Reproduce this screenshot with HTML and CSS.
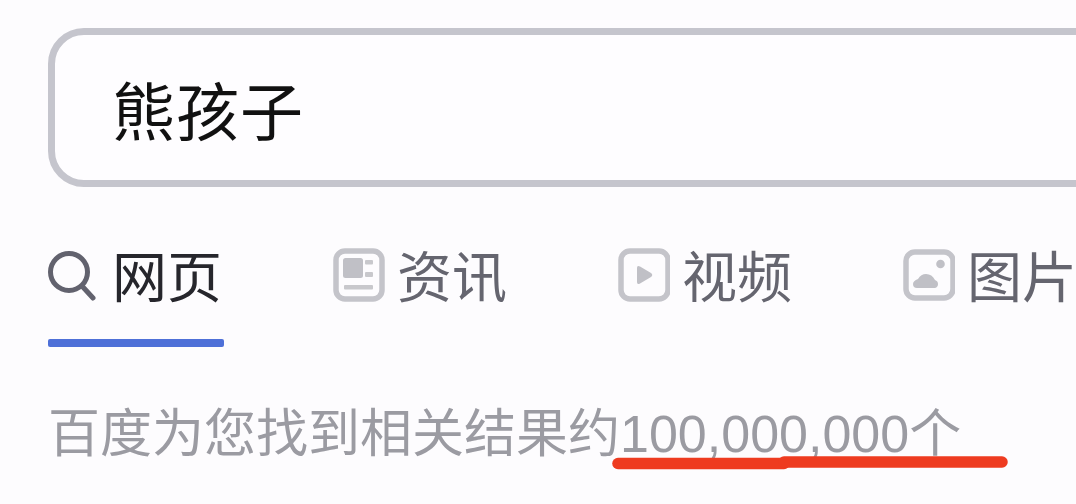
FILE: index.html
```html
<!DOCTYPE html>
<html lang="zh">
<head>
<meta charset="utf-8">
<title>熊孩子</title>
<link rel="stylesheet" href="styles.css">
</head>
<body>
<main class="page">
  <div class="search-box"><span class="query">熊孩子</span></div>
  <nav class="tabs">
    <div class="tab tab-active">
      <svg class="icon icon-search" viewBox="0 0 48 50"><circle cx="21" cy="21" r="18.5" fill="none" stroke="#62626e" stroke-width="5"/><path d="M34 35l11 12" fill="none" stroke="#62626e" stroke-width="5" stroke-linecap="round"/></svg>
      <span class="label">网页</span>
      <i class="tab-bar"></i>
    </div>
    <div class="tab">
      <svg class="icon" viewBox="0 0 52 54"><rect x="3" y="3" width="46" height="48" rx="9" fill="none" stroke="#c4c4ca" stroke-width="5.5"/><rect x="10" y="10" width="20" height="20" rx="2.5" fill="#c0c0c6"/><rect x="32" y="12" width="8" height="4.500" rx="1" fill="#c8c8cc"/><rect x="32" y="24" width="8" height="5" rx="1" fill="#c8c8cc"/><rect x="11" y="37" width="29" height="4.500" rx="1" fill="#c8c8cc"/></svg>
      <span class="label">资讯</span>
    </div>
    <div class="tab">
      <svg class="icon" viewBox="0 0 52 54"><rect x="3" y="3" width="47" height="48" rx="9" fill="none" stroke="#c4c4ca" stroke-width="5.5"/><path d="M19 20q0-3 3-1.500l11 6.500q2.500 2 0 4l-11 6.500q-3 1.500-3-1.500z" fill="#c0c0c6"/></svg>
      <span class="label">视频</span>
    </div>
    <div class="tab">
      <svg class="icon" viewBox="0 0 52 54"><rect x="3" y="4" width="47" height="46" rx="9" fill="none" stroke="#c4c4ca" stroke-width="5.5"/><circle cx="37.500" cy="16" r="4.300" fill="#c0c0c6"/><path d="M14 40q-4 0-4-4 0-3 5-5 3-5 8-5 6 0 9 6 3 1 3 4t-3 4z" fill="#c0c0c6"/></svg>
      <span class="label">图片</span>
    </div>
  </nav>
  <p class="result">百度为您找到相关结果约<span class="num">100,000,000</span>个</p>
  <svg class="scribble" viewBox="0 0 400 16"><path d="M6 8.500H172" stroke="#ee3b20" stroke-width="11.500" stroke-linecap="round" fill="none"/><path d="M172 7H390" stroke="#ee3b20" stroke-width="11.500" stroke-linecap="round" fill="none"/></svg>
</main>
</body>
</html>
```
FILE: styles.css
```css
html, body {
  margin: 0;
  padding: 0;
  background: #fdfcfe;
}
.page {
  position: relative;
  width: 1076px;
  height: 504px;
  overflow: hidden;
  padding: 28px 0 0 48px;
  box-sizing: border-box;
  font-family: "Noto Sans CJK SC", "Liberation Sans", sans-serif;
}
.search-box {
  width: 1100px;
  height: 159px;
  box-sizing: border-box;
  border: 7px solid #c5c5cd;
  border-radius: 36px;
  background: #fefdff;
  display: flex;
  align-items: center;
  padding-left: 57px;
}
.query {
  font-size: 63px;
  line-height: 1;
  color: #111;
  letter-spacing: 1px;
}
.tabs {
  display: flex;
  margin-top: 58px;
  height: 102px;
}
.tab {
  position: relative;
  display: flex;
  flex: none;
  align-items: flex-start;
  gap: 12px;
  margin-right: 111px;
  font-size: 55px;
  line-height: 56px;
  color: #65656f;
}
.label {
  white-space: nowrap;
}
.tab-active {
  color: #26262c;
  gap: 16px;
}
.icon {
  width: 52px;
  height: 54px;
  margin-top: 3px;
  flex: none;
}
.icon-search {
  width: 48px;
  height: 50px;
  margin-top: 6px;
}
.tab-bar {
  position: absolute;
  left: 0;
  right: -2px;
  top: 94px;
  height: 8px;
  border-radius: 2px;
  background: #4e70d8;
}
.result {
  margin: 0;
  padding-top: 49px;
  font-size: 52px;
  line-height: 68px;
  color: #9b9ba2;
  white-space: nowrap;
}
.num {
  font-family: "Liberation Sans", sans-serif;
  font-size: 52px;
}
.scribble {
  position: absolute;
  left: 612px;
  top: 455px;
  width: 400px;
  height: 16px;
}
```
